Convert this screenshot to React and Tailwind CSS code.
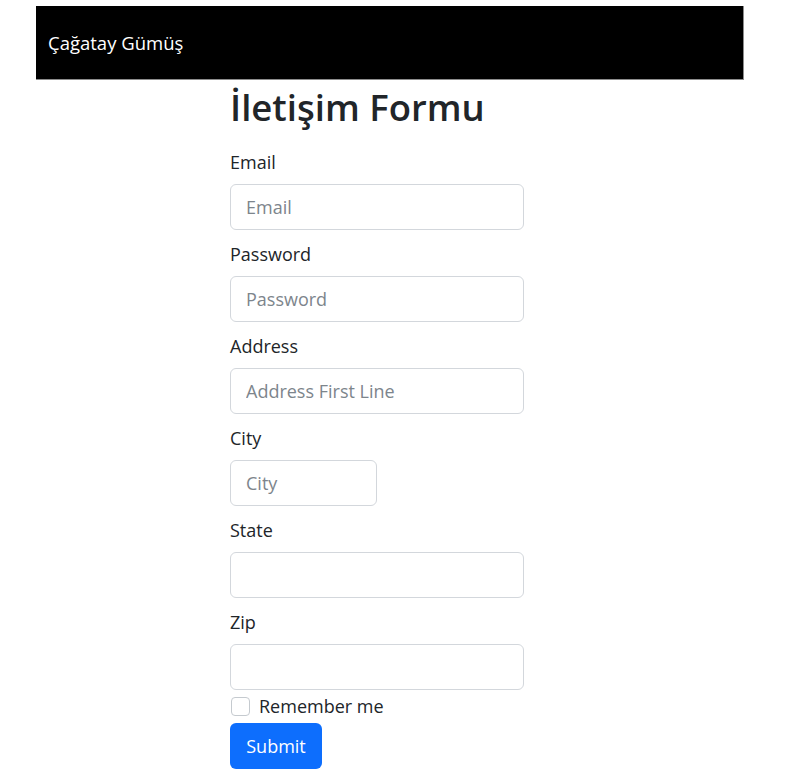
import React from "react";

function Field({ label, placeholder, narrow }) {
  return (
    <div className="flex flex-col">
      <label className="h-[24px] leading-[24px] text-[18px] text-[#212529]">{label}</label>
      <input
        placeholder={placeholder}
        className={`mt-[10px] h-[46px] ${narrow ? "w-[147px]" : "w-[294px]"} rounded-[6px] border border-[#d3d7dc] bg-white px-[15px] text-[18px] text-[#212529] placeholder:text-[#7d858c] outline-none`}
      />
    </div>
  );
}

export default function App() {
  return (
    <div className="min-h-[783px] bg-white pt-[6px] font-['Open_Sans',sans-serif]">
      <nav className="ml-[36px] flex h-[74px] w-[708px] items-center border-b border-r border-[#8c8c8c] bg-black pl-[12px]">
        <span className="text-[18.5px] text-white">Çağatay Gümüş</span>
      </nav>
      <div className="ml-[230px] w-[294px]">
        <h1 className="mt-[1px] h-[52px] whitespace-nowrap text-[36.5px] font-semibold leading-[52px] text-[#212529]">İletişim Formu</h1>
        <div className="mt-[17px] flex flex-col gap-[12px]">
          <Field label="Email" placeholder="Email" />
          <Field label="Password" placeholder="Password" />
          <Field label="Address" placeholder="Address First Line" />
          <Field label="City" placeholder="City" narrow />
          <Field label="State" placeholder="" />
          <Field label="Zip" placeholder="" />
        </div>
        <div className="mt-[7px] flex h-[19px] items-center">
          <span className="ml-px h-[19px] w-[19px] rounded-[4px] border border-[#c5cacf] bg-white" />
          <span className="ml-[9px] text-[18px] leading-[19px] text-[#212529]">Remember me</span>
        </div>
        <button className="mt-[7px] h-[46px] w-[92px] rounded-[6px] bg-[#0d6efd] text-[18px] text-white">Submit</button>
      </div>
    </div>
  );
}
